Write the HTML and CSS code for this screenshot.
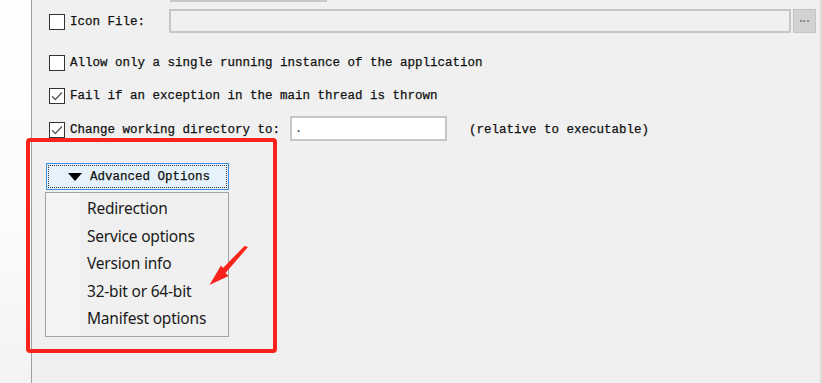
FILE: index.html
```html
<!DOCTYPE html>
<html>
<head>
<meta charset="utf-8">
<link rel="stylesheet" href="styles.css">
</head>
<body>
<div class="page">
  <div class="side"></div>
  <div class="panel">
    <div class="top-field"></div>
    <div class="row row-icon">
      <span class="check"></span>
      <span class="label">Icon File:</span>
      <span class="field field-icon"></span>
      <span class="browse"><span class="dash"></span></span>
    </div>
    <div class="row row-allow">
      <span class="check"></span>
      <span class="label">Allow only a single running instance of the application</span>
    </div>
    <div class="row row-fail">
      <span class="check checked"><svg viewBox="0 0 16 16" width="16" height="16"><path d="M3 8.2 L6.3 11.5 L13 4.5" fill="none" stroke="#5a5a5a" stroke-width="1.3"/></svg></span>
      <span class="label">Fail if an exception in the main thread is thrown</span>
    </div>
    <div class="row row-dir">
      <span class="check checked"><svg viewBox="0 0 16 16" width="16" height="16"><path d="M3 8.2 L6.3 11.5 L13 4.5" fill="none" stroke="#5a5a5a" stroke-width="1.3"/></svg></span>
      <span class="label">Change working directory to:</span>
      <span class="field field-dir"><span class="dot">.</span></span>
      <span class="label hint">(relative to executable)</span>
    </div>
    <div class="adv">
      <div class="adv-btn">
        <span class="focus">
          <span class="tri"></span>
          <span class="label">Advanced Options</span>
        </span>
      </div>
      <ul class="menu">
        <li>Redirection</li>
        <li>Service options</li>
        <li>Version info</li>
        <li>32-bit or 64-bit</li>
        <li>Manifest options</li>
      </ul>
    </div>
  </div>
  <div class="annot-box"></div>
  <svg class="annot-arrow" width="60" height="60" viewBox="0 0 60 60">
    <path d="M48 7 L44.5 6 L23 28 L21 25.5 L9.5 45 L28.5 36 L25.5 33 Z" fill="#f8231a"/>
  </svg>
</div>
</body>
</html>
```

FILE: styles.css
```css
* { box-sizing: border-box; }
html, body { margin: 0; padding: 0; }
body {
  width: 822px;
  height: 383px;
  overflow: hidden;
  background: #f0f0f0;
}
.page {
  position: relative;
  display: flex;
  width: 822px;
  height: 383px;
}
.side {
  width: 31px;
  flex: none;
  background: linear-gradient(to bottom, #ffffff 0%, #fbfbfb 60%, #f3f3f3 100%);
}
.panel {
  flex: 1;
  height: 383px;
  background: #f0f0f0;
  border-left: 1px solid #9e9e9e;
  border-right: 2px solid #dcdcdc;
  padding-left: 17px;
  display: flex;
  flex-direction: column;
  align-items: flex-start;
}
.top-field {
  margin-left: 121px;
  width: 157px;
  height: 24px;
  margin-top: -22px;
  border: 2px solid #c8c8c8;
  background: #f0f0f0;
}
.row {
  display: flex;
  align-items: center;
  height: 24px;
}
.row-icon { margin-top: 7px; }
.row-allow { margin-top: 16px; }
.row-fail { margin-top: 10px; }
.row-dir { margin-top: 9px; height: 25px; }
.row-icon .label, .row-allow .label, .row-fail .label, .row-dir .label { position: relative; top: 1px; }
.row-icon .check, .row-allow .check, .row-fail .check, .row-dir .check { position: relative; top: 1px; }
.check {
  width: 16px;
  height: 16px;
  flex: none;
  border: 1px solid #333;
  background: #fff;
  display: flex;
  align-items: center;
  justify-content: center;
  margin-right: 5px;
}
.row-allow .check, .row-allow .label { top: 2px; }
.check svg { display: block; margin: -1px; }
.label {
  font-family: "Liberation Mono", "DejaVu Sans Mono", monospace;
  font-size: 12.5px;
  color: #111;
  white-space: pre;
  letter-spacing: 0;
  -webkit-text-stroke: 0.25px #111;
}
.field {
  display: block;
  height: 24px;
  border: 2px solid #c6c6c6;
}
.field-icon {
  margin-left: 24px;
  width: 622px;
  background: #f0f0f0;
}
.browse {
  margin-left: 2px;
  width: 23px;
  height: 24px;
  background: #d2d2d2;
  border: 1px solid #c4c4c4;
  display: flex;
  align-items: center;
  justify-content: center;
}
.dash {
  width: 9px;
  height: 0;
  border-top: 2px dotted #8a8a8a;
}
.field-dir {
  margin-left: 10px;
  width: 157px;
  height: 25px;
  background: #fff;
  position: relative;
}
.dot {
  position: absolute;
  left: 3px;
  top: 4px;
  font-family: "Liberation Mono", monospace;
  font-size: 12px;
  color: #333;
}
.hint { margin-left: 22px; }
.adv {
  margin-top: 22px;
  margin-left: -4px;
}
.adv-btn {
  margin-left: 1px;
  width: 183px;
  height: 27px;
  border: 1px solid #3c8ddb;
  background: #e5f1fb;
  padding: 1px;
}
.focus {
  display: flex;
  align-items: center;
  width: 100%;
  height: 100%;
  border: 1px dotted #333;
  padding-left: 19px;
}
.tri {
  width: 0;
  height: 0;
  border-left: 7px solid transparent;
  border-right: 7px solid transparent;
  border-top: 8px solid #000;
  margin-right: 8px;
  margin-top: 1px;
}
.menu {
  list-style: none;
  margin: 2px 0 0 0;
  padding: 2px 0 0 0;
  width: 184px;
  height: 145px;
  border: 1px solid #a3a3a3;
  background: linear-gradient(to right, #f4f4f4 0, #f4f4f4 34px, #f0f0f0 34px);
}
.menu li {
  font-family: "Noto Sans", "Open Sans", sans-serif;
  font-size: 15.5px;
  letter-spacing: -0.2px;
  color: #1a1a1a;
  height: 27.5px;
  line-height: 27.5px;
  padding-left: 41px;
  white-space: nowrap;
}
.annot-box {
  position: absolute;
  left: 26px;
  top: 138px;
  width: 251px;
  height: 215px;
  border: 4px solid #f8231a;
  border-radius: 4px;
}
.annot-arrow {
  position: absolute;
  left: 200px;
  top: 240px;
}
```
